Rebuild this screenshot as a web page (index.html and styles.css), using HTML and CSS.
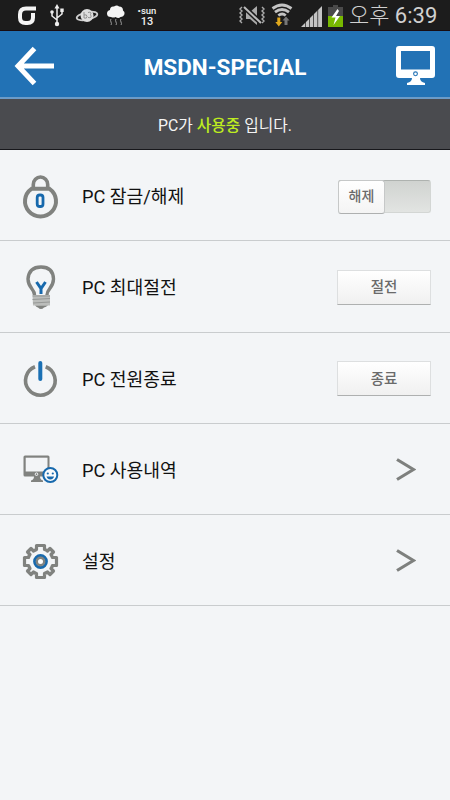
FILE: index.html
```html
<!DOCTYPE html>
<html lang="ko">
<head>
<meta charset="utf-8">
<title>MSDN-SPECIAL</title>
<link rel="stylesheet" href="styles.css">
</head>
<body>
<div class="status">
  <svg class="status-left" width="130" height="31" viewBox="0 0 130 31">
    <g fill="none" stroke="#f4f4f4" stroke-width="4">
      <path d="M36 8.500H26q-6 0-6 6v3q0 5.500 5.500 5.500h2q5.500 0 5.500-5.500V13"/>
    </g>
    <g fill="none" stroke="#eee" stroke-width="1.500">
      <path d="M57 7v16M57 20l-5-4v-4M57 18l5-4v-4"/>
    </g>
    <g fill="#eee"><path d="M57 4l2.500 4.500h-5z"/><circle cx="57" cy="24" r="2.200"/><circle cx="52" cy="12" r="1.800"/><path d="M60.300 8.500h3.400v3.500h-3.400z"/></g>
    <ellipse cx="87" cy="16" rx="10.500" ry="3.800" transform="rotate(-12 87 16)" fill="none" stroke="#ccc" stroke-width="1.800"/>
    <circle cx="87" cy="15.500" r="6.500" fill="#ddd"/>
    <path d="M84 12v6q3 1 3-1.500t-3-1.500M88 12.500q4-1 2.500 2q2 4-2.500 3" fill="none" stroke="#888" stroke-width=".9"/>
    <path d="M111 17q-4 0-4-3.500 0-3 3-3.500 0-4 4-3.500 3-2 5 0 4 0 4 4 2 1 1.500 3.500-1 3-4 3-2 2-5 0-2 1-4.500 0z" fill="#f5f5f5"/>
    <path d="M111 19q-1 1 0 3t0 3M116 19q-1 1 0 3t0 3M121 19q-1 1 0 3t0 3" fill="none" stroke="#999"/>
  </svg>
  <div class="date"><span class="day">•sun</span><span class="num">13</span></div>
  <svg class="status-right" width="110" height="31" viewBox="238 0 110 31">
    <path d="M246 12h4l7-6v19l-7-6h-4z" fill="#aaa"/>
    <path d="M244 7l17 16" stroke="#1c1c1c" stroke-width="5"/><path d="M244 7l17 16" stroke="#bbb" stroke-width="2"/>
    <path d="M242 7l-2 2 2 2-2 2 2 2-2 2 2 2-2 2 2 2M262 7l2 2-2 2 2 2-2 2 2 2-2 2 2 2-2 2" fill="none" stroke="#aaa" stroke-width="1.400"/>
    <path d="M272.500 8.500q9.500-7 19 0M275 12.200q7-5.500 14 0M278.300 15.500q4-3 7.400 0" fill="none" stroke="#c4c4c4" stroke-width="2.800"/>
    <path d="M277.300 17.500h3V22h2l-3.500 4.500-3.500-4.500h2z" fill="#e0a81c"/>
    <path d="M284.500 25v-4.500h-2l3.500-4 3.500 4h-2V25z" fill="#777"/>
    <path d="M301 27l21-21v21z" fill="#c4c4c4"/>
    <path d="M305.500 20v8M309.500 16v12M313.500 12v16M317.700 8v20" stroke="#1c1c1c" stroke-width=".7"/>
    <path d="M333 5h5v2h5v9h-15V7h5z" fill="#4a4a4a"/><path d="M328 16h15v11h-15z" fill="#78b900"/>
    <path d="M337.500 9l-6 8.500h4l-2 7.500 6.500-9h-4l3-5z" fill="#fff"/>
  </svg>
  <div class="clock">오후 <span>6:39</span></div>
</div>

<header class="header">
  <svg width="60" height="66" viewBox="0 0 60 66"><path d="M34.500 17.500L18 35l16.500 17.500M18 35h36" fill="none" stroke="#fff" stroke-width="5"/></svg>
  <h1>MSDN-SPECIAL</h1>
  <svg width="60" height="66" viewBox="390 31 60 66">
    <path d="M399 46h33q3 0 3 3v26q0 3-3 3h-12q0 4 5 5v2h-18v-2q5-1 5-5h-13q-3 0-3-3V49q0-3 3-3z" fill="#fff"/>
    <path d="M401 51h29v18.500h-29z" fill="#2272b5"/><circle cx="415.500" cy="73.800" r="1.900" fill="none" stroke="#2272b5" stroke-width="1.100"/>
  </svg>
</header>
<div class="notice"><p>PC가 <b>사용중</b> 입니다.</p></div>

<main>
  <section class="row">
    <svg class="icon" viewBox="0 0 82 91">
      <g fill="none" stroke="#80827f"><path d="M31.500 38.800H49.500A15.500 15.200 0 1 1 31.500 38.800z" stroke-width="4"/><path d="M33.300 39v-4.500a7.200 7.500 0 0 1 14.400 0V39" stroke-width="3.600"/></g>
      <rect x="37.200" y="45" width="5.800" height="11.500" rx="2.600" fill="none" stroke="#1769ad" stroke-width="2.800"/>
    </svg>
    <span class="label">PC 잠금/해제</span>
    <div class="switch"><span class="knob">해제</span></div>
  </section>
  <section class="row">
    <svg class="icon" viewBox="0 0 82 91">
      <path d="M34.500 54q0-3-2.500-6-4-5-4-10 1-12 13-12t12.500 12q0 5-4 10-2.500 3-2.500 6" fill="none" stroke="#80827f" stroke-width="3.400"/>
      <path d="M36.500 41l4.500 6.500 4.500-6.500M41 47v6" fill="none" stroke="#1769ad" stroke-width="3"/>
      <path d="M32.500 54h17.500v10.500H33z" fill="#bbbdbb"/><path d="M32.500 55h17.500M32.500 58.500l17.500-1M33 62l17-1" stroke="#969896" stroke-width="1"/>
      <path d="M35 64.500h13q-3 2-4 2-3 3-6 0-1 0-3-2z" fill="#80827f"/>
    </svg>
    <span class="label">PC 최대절전</span>
    <button class="btn"><span>절전</span></button>
  </section>
  <section class="row">
    <svg class="icon" viewBox="0 0 82 91">
      <path d="M35 34.700A14.800 14.800 0 1 0 45.700 34.700" fill="none" stroke="#80827f" stroke-width="3.600"/>
      <path d="M40.300 31v16" stroke="#1a70b4" stroke-width="4" stroke-linecap="round"/>
    </svg>
    <span class="label">PC 전원종료</span>
    <button class="btn"><span>종료</span></button>
  </section>
  <section class="row">
    <svg class="icon" viewBox="0 0 82 91">
      <path d="M25 32.500h23q1.500 0 1.500 1.500v18q0 1.500-1.500 1.500h-8q0 3 3 4v1.500H31v-1.500q3-1 3-4h-9q-1.500 0-1.500-1.500V34q0-1.500 1.500-1.500z" fill="#80827f"/>
      <path d="M25.700 34.700h21.800v13.800H25.700z" fill="#f3f5f7"/><circle cx="36.500" cy="51.200" r="1.300" fill="none" stroke="#f3f5f7"/>
      <circle cx="50.300" cy="52" r="7" fill="#f8fafc" stroke="#1769ad" stroke-width="2"/>
      <circle cx="47.800" cy="50.500" r="1.100" fill="#1769ad"/><circle cx="52.800" cy="50.500" r="1.100" fill="#1769ad"/>
      <path d="M46.500 53.500h7.600q-1 3-3.800 3t-3.800-3z" fill="#1769ad"/>
    </svg>
    <span class="label">PC 사용내역</span>
    <svg class="chevron" viewBox="0 0 20 24"><path d="M1 2.500L17.500 12.500 1 22.500" fill="none" stroke="#7e807e" stroke-width="3.200"/></svg>
  </section>
  <section class="row">
    <svg class="icon" viewBox="0 0 82 91">
      <path transform="translate(40.500 46.500)" d="M-4-16H4V-12Q6-11.500 7-10.500L9.500-13 13-9.500 10.500-7Q11.500-5 12-4H16V4H12Q11.500 6 10.500 7L13 9.500 9.500 13 7 10.500Q5 11.500 4 12V16H-4V12Q-6 11.500-7 10.500L-9.500 13-13 9.500-10.500 7Q-11.500 5-12 4H-16V-4H-12Q-11.500-6-10.500-7L-13-9.500-9.500-13-7-10.500Q-5-11.500-4-12Z" fill="none" stroke="#80827f" stroke-width="3.200" stroke-linejoin="round"/>
      <circle cx="40.500" cy="46.500" r="6" fill="none" stroke="#1769ad" stroke-width="2.800"/>
      <circle cx="40.500" cy="46.500" r="3.700" fill="#fff" stroke="#80827f" stroke-width="2.400"/>
    </svg>
    <span class="label">설정</span>
    <svg class="chevron" viewBox="0 0 20 24"><path d="M1 2.500L17.500 12.500 1 22.500" fill="none" stroke="#7e807e" stroke-width="3.200"/></svg>
  </section>
</main>
</body>
</html>
```
FILE: styles.css
```css
* { box-sizing: border-box; }
body {
  margin: 0;
  width: 450px;
  height: 800px;
  overflow: hidden;
  background: #f3f5f7;
  font-family: Roboto, "Noto Sans CJK KR", sans-serif;
}
svg { display: block; flex: none; }
.status {
  display: flex;
  height: 31px;
  background: #1c1c1c;
  border-bottom: 1px solid #180c10;
}
.date {
  width: 34px;
  padding-top: 7px;
  color: #eee;
  text-align: center;
  font-weight: 500;
}
.date span { display: block; white-space: nowrap; }
.day { font-size: 9.500px; line-height: 8px; }
.num { font-size: 11px; line-height: 13px; }
.status-right { margin-left: 74px; }
.clock {
  margin-left: 1px;
  line-height: 31px;
  font-size: 22px;
  font-weight: 300;
  color: #d0d0d0;
  white-space: nowrap;
}
.clock span { font-weight: 400; }
.header {
  display: flex;
  align-items: center;
  height: 68px;
  background: #2272b5;
  border-bottom: 2px solid #6b9bc8;
}
.header h1 {
  flex: 1;
  margin: 6px 0 0;
  text-align: center;
  font-size: 22.500px;
  line-height: 26px;
  font-weight: 700;
  color: #fff;
}
.notice {
  height: 51px;
  background: #4a4b4f;
  border-bottom: 1px solid #17171b;
}
.notice p {
  margin: 0;
  line-height: 54px;
  text-align: center;
  font-size: 15.800px;
  color: #f4f4f4;
}
.notice b { color: #bdec20; font-weight: 500; }
.row {
  display: flex;
  align-items: center;
  height: 91.250px;
  padding-right: 19px;
  border-bottom: 1px solid #c9ccce;
}
.icon { width: 82px; height: 91px; }
.label {
  flex: 1;
  margin-top: 4px;
  font-size: 18.200px;
  line-height: 26px;
  color: #111;
}
.btn {
  width: 94px;
  height: 35px;
  margin: 2px 0 0;
  padding: 0 0 3px;
  border: 1px solid #dddfe0;
  border-bottom-color: #aeb0b0;
  background: linear-gradient(#fff, #f0f0f0);
  font: 500 14.500px/29px "Noto Sans CJK KR", sans-serif;
  color: #6a6a6a;
}
.switch {
  width: 93px;
  height: 33px;
  margin-top: 2px;
  border: 1px solid #d3d6d4;
  border-top-color: #aeb2af;
  border-radius: 3px;
  background: linear-gradient(#d0d3d0, #e2e4e2);
}
.knob {
  display: block;
  width: 47px;
  height: 34px;
  margin: -1px;
  border: 1px solid #c6c8c8;
  border-bottom-color: #aeb0b0;
  border-radius: 3px;
  background: linear-gradient(#fff, #f4f4f4);
  text-align: center;
  font-size: 14px;
  font-weight: 500;
  line-height: 31px;
  color: #6a6a6a;
}
.chevron { width: 20px; height: 24px; margin-right: 15px; }
```
